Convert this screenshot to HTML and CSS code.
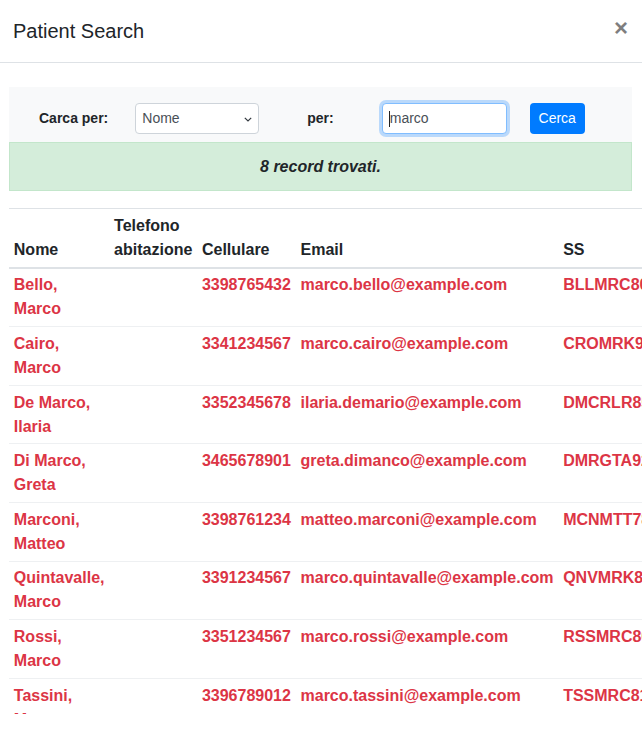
FILE: index.html
```html
<!DOCTYPE html>
<html lang="it">
<head>
<meta charset="utf-8">
<title>Patient Search</title>
<link rel="stylesheet" href="styles.css">
</head>
<body>
<div class="modal">
  <div class="modal-header">
    <h5 class="modal-title">Patient Search</h5>
    <span class="close">&times;</span>
  </div>
  <div class="modal-body">
    <div class="search-bar">
      <span class="lbl lbl-first">Carca per:</span>
      <div class="select">
        <span>Nome</span>
        <svg class="chev" width="8" height="5" viewBox="0 0 8 5"><path d="M0.8 0.8 L4 4 L7.2 0.8" fill="none" stroke="#343a40" stroke-width="1.2"/></svg>
      </div>
      <span class="lbl lbl-second">per:</span>
      <div class="input"><span class="caret"></span>marco</div>
      <span class="btn">Cerca</span>
    </div>
    <div class="alert">8 record trovati.</div>
    <table class="table">
      <thead>
        <tr><th>Nome</th><th>Telefono abitazione</th><th>Cellulare</th><th>Email</th><th>SS</th></tr>
      </thead>
      <tbody>
        <tr><td>Bello, Marco</td><td></td><td>3398765432</td><td>marco.bello@example.com</td><td>BLLMRC80A01H501U</td></tr>
        <tr><td>Cairo, Marco</td><td></td><td>3341234567</td><td>marco.cairo@example.com</td><td>CROMRK90B12F205X</td></tr>
        <tr><td>De Marco, Ilaria</td><td></td><td>3352345678</td><td>ilaria.demario@example.com</td><td>DMCRLR85C41H501Y</td></tr>
        <tr><td>Di Marco, Greta</td><td></td><td>3465678901</td><td>greta.dimanco@example.com</td><td>DMRGTA92D52F205W</td></tr>
        <tr><td>Marconi, Matteo</td><td></td><td>3398761234</td><td>matteo.marconi@example.com</td><td>MCNMTT78E15H501K</td></tr>
        <tr><td>Quintavalle, Marco</td><td></td><td>3391234567</td><td>marco.quintavalle@example.com</td><td>QNVMRK83H10L219T</td></tr>
        <tr><td>Rossi, Marco</td><td></td><td>3351234567</td><td>marco.rossi@example.com</td><td>RSSMRC80A01H501Z</td></tr>
        <tr><td>Tassini, Marco</td><td></td><td>3396789012</td><td>marco.tassini@example.com</td><td>TSSMRC81L20D612Q</td></tr>
      </tbody>
    </table>
  </div>
</div>
</body>
</html>
```
FILE: styles.css
```css
* { box-sizing: border-box; }
html, body { margin: 0; padding: 0; background: #fff; overflow: hidden; }
body {
  font-family: "Liberation Sans", Arial, sans-serif;
  font-size: 16px;
  line-height: 1.5;
  color: #212529;
  width: 642px;
  height: 729px;
}
.modal {
  width: 642px;
  height: 714px;
  overflow: hidden;
}
.modal-header {
  display: flex;
  align-items: flex-start;
  justify-content: space-between;
  padding: 16px 13px 16px 13px;
  border-bottom: 1px solid #dee2e6;
  height: 63px;
}
.modal-title {
  margin: 0;
  font-size: 20px;
  font-weight: 400;
  line-height: 30px;
  color: #212529;
}
.close {
  font-size: 24px;
  font-weight: 700;
  line-height: 24px;
  color: #000;
  opacity: .5;
  margin-top: 0;
  margin-right: 1px;
}
.modal-body {
  padding: 24px 10px 0 9px;
}
.search-bar {
  background: #f8f9fa;
  display: flex;
  align-items: center;
  padding: 16px 0 8px 30px;
  height: 55px;
  font-size: 14px;
}
.lbl { font-weight: 700; color: #212529; line-height: 21px; }
.lbl-first { margin-right: 27px; }
.lbl-second { margin-left: 48px; margin-right: 48px; }
.select {
  width: 124px;
  height: 31px;
  border: 1px solid #ced4da;
  border-radius: 4px;
  background: #fff;
  display: flex;
  align-items: center;
  justify-content: space-between;
  padding: 0 6px 0 6px;
  color: #495057;
}
.chev { margin-top: 1px; }
.input {
  width: 125px;
  height: 31px;
  border: 1px solid #80bdff;
  border-radius: 4px;
  background: #fff;
  box-shadow: 0 0 0 3px rgba(0,123,255,.25);
  display: flex;
  align-items: center;
  padding: 0 6px;
  color: #495057;
}
.caret {
  display: inline-block;
  width: 1px;
  height: 16px;
  background: #222;
  margin-right: 0;
}
.btn {
  margin-left: 23px;
  width: 55px;
  height: 31px;
  background: #007bff;
  color: #fff;
  border-radius: 4px;
  display: flex;
  align-items: center;
  justify-content: center;
}
.alert {
  background: #d4edda;
  border: 1px solid #c3e6cb;
  height: 49px;
  display: flex;
  align-items: center;
  justify-content: center;
  font-weight: 700;
  font-style: italic;
  color: #212529;
  margin-bottom: 17px;
}
.table {
  border-collapse: collapse;
  width: 100%;
}
.table th, .table td {
  padding: 4.8px;
  text-align: left;
  vertical-align: top;
  border-top: 1px solid #eef0f2;
}
.table thead th {
  vertical-align: bottom;
  border-top: 1px solid #dee2e6;
  border-bottom: 2px solid #dee2e6;
  color: #212529;
}
.table td {
  color: #dc3545;
  font-weight: 700;
}
.table tbody tr:first-child td { border-top: 0; }
```
